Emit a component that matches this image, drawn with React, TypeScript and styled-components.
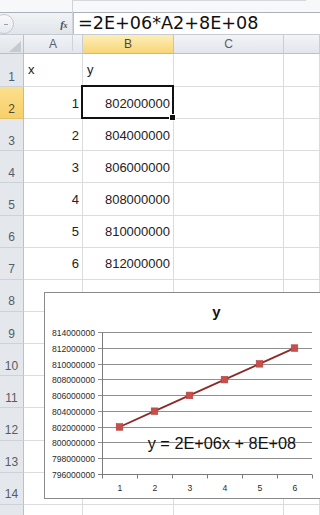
import React from 'react';
import styled, { createGlobalStyle } from 'styled-components';

const GlobalStyle = createGlobalStyle`
  html, body {
    margin: 0;
    padding: 0;
    background: #fff;
  }
  body {
    width: 320px;
    height: 515px;
    overflow: hidden;
    font-family: "Liberation Sans", Arial, sans-serif;
  }
  * { box-sizing: border-box; }
`;

const Sheet = styled.div`
  position: relative;
  width: 320px;
  height: 515px;
  overflow: hidden;
  background: #fff;
`;

const TopStrip = styled.div`
  height: 12px;
  background: #f7f8fa;
`;

const GhostBox = styled.div`
  position: absolute;
  left: 72px;
  top: 0;
  width: 234px;
  height: 51px;
  border-top: 1px solid #d6d8db;
  border-left: 1px solid #cfd2d6;
  pointer-events: none;
`;

const FormulaBar = styled.div`
  display: flex;
  height: 23px;
  border-top: 1px solid #aab1bb;
  border-bottom: 1px solid #c5cbd3;
`;

const NameArea = styled.div`
  position: relative;
  width: 73px;
  display: flex;
  align-items: center;
  justify-content: flex-end;
  padding-right: 6px;
  background: linear-gradient(#f1f3f6, #e1e5ea);
  overflow: hidden;
`;

const RoundKnob = styled.div`
  position: absolute;
  left: -6px;
  top: 1px;
  width: 20px;
  height: 20px;
  border-radius: 50%;
  border: 1px solid #c4c9d0;
  background: linear-gradient(#f8f9fb, #e6e9ed);

  &::after {
    content: '';
    position: absolute;
    left: 9px;
    top: 9px;
    width: 4px;
    height: 1px;
    background: #9aa1aa;
  }
`;

const FxLabel = styled.span`
  font-family: "Liberation Serif", "Times New Roman", serif;
  font-style: italic;
  font-weight: bold;
  font-size: 11px;
  color: #4a4f57;
  letter-spacing: -0.5px;

  small {
    font-size: 8px;
  }
`;

const FormulaInput = styled.div`
  flex: 1;
  background: #fff;
  border-left: 1px solid #b9c0c9;
  padding-left: 4px;
  font-family: "DejaVu Sans", sans-serif;
  font-size: 17.6px;
  line-height: 21px;
  color: #111;
  white-space: nowrap;
`;

const Grid = styled.div`
  display: grid;
  grid-template-columns: 24px 59px 91px 110px 1fr;
  grid-template-rows: 19px 33px repeat(14, 32.15px);
`;

const Corner = styled.div`
  display: flex;
  align-items: flex-end;
  justify-content: flex-end;
  padding: 0 2px 1px 0;
  background: linear-gradient(#eef0f3, #e0e4e9);
  border-right: 1px solid #b9c0c9;
  border-bottom: 1px solid #b9c0c9;
`;

const CornerTriangle = styled.div`
  width: 0;
  height: 0;
  border-left: 12px solid transparent;
  border-bottom: 11px solid #c5cad0;
`;

const ColHead = styled.div<{ $active?: boolean }>`
  display: flex;
  align-items: center;
  justify-content: center;
  font-size: 12px;
  color: ${p => (p.$active ? '#4d4a3c' : '#5a616b')};
  background: ${p =>
    p.$active ? 'linear-gradient(#fdeeb8, #f8d677)' : 'linear-gradient(#f2f4f6, #e2e6eb)'};
  border-right: 1px solid ${p => (p.$active ? '#e2c46f' : '#c9ced5')};
  border-bottom: 1px solid ${p => (p.$active ? '#e9b64a' : '#b9c0c9')};
`;

const RowHead = styled.div<{ $active?: boolean }>`
  display: flex;
  align-items: flex-end;
  justify-content: center;
  padding-bottom: 2.5px;
  font-size: 12px;
  line-height: 14px;
  color: ${p => (p.$active ? '#4d4a3c' : '#555c66')};
  background: ${p => (p.$active ? 'linear-gradient(#fbdf8e, #f7d068)' : '#e4e8ed')};
  border-right: 1px solid ${p => (p.$active ? '#e3b84c' : '#b9c0c9')};
  border-bottom: 1px solid ${p => (p.$active ? '#e6c069' : '#cdd2d9')};
`;

const Cell = styled.div<{ $right?: boolean; $first?: boolean; $selected?: boolean }>`
  position: relative;
  display: flex;
  align-items: flex-end;
  justify-content: ${p => (p.$right ? 'flex-end' : 'flex-start')};
  padding: 0 3px ${p => (p.$first ? '9px' : '7.5px')} ${p => (p.$first ? '4px' : '3px')};
  font-size: 13px;
  line-height: 15px;
  color: #222;
  border-right: 1px solid #dadcdf;
  border-bottom: 1px solid #dadcdf;
  white-space: nowrap;

  ${p =>
    p.$selected &&
    `
    &::after {
      content: '';
      position: absolute;
      left: -2px;
      top: -2px;
      right: -1px;
      bottom: -1px;
      border: 2px solid #111;
    }
    &::before {
      content: '';
      position: absolute;
      right: -3px;
      bottom: -3px;
      width: 5px;
      height: 5px;
      background: #111;
      border: 1px solid #fff;
      z-index: 2;
    }
  `}
`;

const ChartFrame = styled.div`
  position: absolute;
  left: 44px;
  top: 292px;
  width: 300px;
  height: 207px;
  background: #fff;
  border: 1px solid #8a8a8a;
`;

const rows: { n: number; a?: string; b?: string }[] = [
  { n: 1, a: 'x', b: 'y' },
  { n: 2, a: '1', b: '802000000' },
  { n: 3, a: '2', b: '804000000' },
  { n: 4, a: '3', b: '806000000' },
  { n: 5, a: '4', b: '808000000' },
  { n: 6, a: '5', b: '810000000' },
  { n: 7, a: '6', b: '812000000' },
  ...[8, 9, 10, 11, 12, 13, 14, 15].map(n => ({ n })),
];

// chart drawn in page coordinates, shifted by the frame origin
const OX = 45;
const OY = 293;
const PLOT_L = 102;
const PLOT_R = 312;
const CAT_W = 35;
const gy = (i: number) => Math.round(332 + i * 15.78) + 0.5;
const valueY = (v: number) => 474.3 - ((v - 796) / 2) * 15.78;

const Chart: React.FC = () => {
  const labels = [814, 812, 810, 808, 806, 804, 802, 800, 798, 796];
  const pts = [802, 804, 806, 808, 810, 812].map((v, i) => ({
    x: PLOT_L + CAT_W * (i + 0.5),
    y: valueY(v),
  }));
  const axisY = gy(9);
  return (
    <svg width="300" height="206" style={{ display: 'block' }}>
      <g transform={`translate(${-OX} ${-OY})`} fontFamily="Liberation Sans, Arial, sans-serif">
        <text x="216.5" y="316.5" fontSize="15" fontWeight="bold" textAnchor="middle" fill="#111">
          y
        </text>
        {labels.map((l, i) => (
          <g key={l}>
            <line x1={98} x2={PLOT_R} y1={gy(i)} y2={gy(i)} stroke={i === 9 ? '#7a7a7a' : '#8f8f8f'} strokeWidth="1" />
            <text x="95" y={gy(i) + 3} fontSize="8.6" textAnchor="end" fill="#2b2b2b">
              {l}000000
            </text>
          </g>
        ))}
        <line x1={PLOT_L + 0.5} x2={PLOT_L + 0.5} y1={gy(0)} y2={axisY} stroke="#7a7a7a" />
        {[0, 1, 2, 3, 4, 5, 6].map(k => (
          <line key={k} x1={PLOT_L + CAT_W * k + 0.5} x2={PLOT_L + CAT_W * k + 0.5} y1={axisY} y2={axisY + 4} stroke="#7a7a7a" />
        ))}
        {pts.map((p, i) => (
          <text key={i} x={p.x + 0.5} y="490.5" fontSize="8.6" textAnchor="middle" fill="#2b2b2b">
            {i + 1}
          </text>
        ))}
        <polyline
          points={pts.map(p => `${p.x},${p.y}`).join(' ')}
          fill="none"
          stroke="#8c2b29"
          strokeWidth="1.8"
        />
        {pts.map((p, i) => (
          <rect key={i} x={p.x - 3.3} y={p.y - 3.3} width="6.6" height="6.6" fill="#c4504d" stroke="#b7423f" strokeWidth="0.6" />
        ))}
        <text x="147.7" y="449.2" fontSize="16.3" fill="#111">
          y = 2E+06x + 8E+08
        </text>
      </g>
    </svg>
  );
};

const App: React.FC = () => {
  return (
    <Sheet>
      <GlobalStyle />
      <TopStrip />
      <FormulaBar>
        <NameArea>
          <RoundKnob />
          <FxLabel>
            f<small>x</small>
          </FxLabel>
        </NameArea>
        <FormulaInput>=2E+06*A2+8E+08</FormulaInput>
      </FormulaBar>
      <Grid>
        <Corner>
          <CornerTriangle />
        </Corner>
        <ColHead>A</ColHead>
        <ColHead $active>B</ColHead>
        <ColHead>C</ColHead>
        <ColHead />
        {rows.map(r => (
          <React.Fragment key={r.n}>
            {/* row 15 only peeks in at the bottom edge, its number is below the fold */}
            <RowHead $active={r.n === 2}>{r.n < 15 ? r.n : null}</RowHead>
            <Cell $right={r.n > 1} $first={r.n === 1}>
              {r.a}
            </Cell>
            <Cell $right={r.n > 1} $first={r.n === 1} $selected={r.n === 2}>
              {r.b}
            </Cell>
            <Cell />
            <Cell />
          </React.Fragment>
        ))}
      </Grid>
      <GhostBox />
      <ChartFrame>
        <Chart />
      </ChartFrame>
    </Sheet>
  );
};

export default App;
